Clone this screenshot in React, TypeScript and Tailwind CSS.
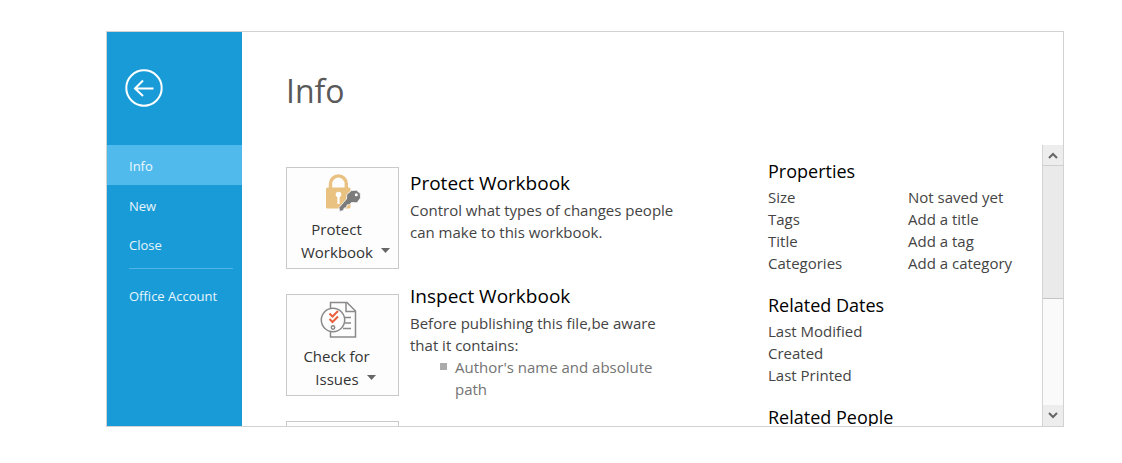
import type { ReactNode } from "react";

const navItem =
  "flex h-[39px] shrink-0 items-center pt-0.5 pl-[22px] text-[13px] leading-5 text-white/90";

function BackIcon() {
  return (
    <svg width="38" height="38" viewBox="0 0 38 38" fill="none" stroke="#fff" strokeWidth="2">
      <circle cx="19" cy="19" r="17.7" />
      <path d="M28.500 19.500H10.500M18 11.500 10 19.500l8 7.500" strokeWidth="2" />
    </svg>
  );
}

function LockKeyIcon() {
  return (
    <svg width="36" height="38" viewBox="0 0 36 38" fill="none">
      <path d="M5.500 15V9.800a7.900 7.900 0 0 1 15.800 0V15" stroke="#e9c180" strokeWidth="3.400" />
      <rect x="1" y="13.500" width="24.500" height="21" rx="1.500" fill="#e9c180" />
      <circle cx="13.500" cy="20.500" r="2.800" fill="#fff" />
      <path d="M12.400 21h2.200v9h-2.200z" fill="#fff" />
      <path
        d="m26.500 16.500 5-.3 3.800 3.300.2 4.500-3.500 4.800-5.500-.3-2 2-2.500.5-.5 2.500-2.500.7-.5 2.300-4 .9-.5-3.900 7.500-8.500.3-4.500z"
        fill="#7b7b7b"
        stroke="#fdfdfd"
        strokeWidth=".8"
      />
      <circle cx="31.300" cy="20.700" r="1.500" fill="#fff" />
    </svg>
  );
}

function InspectIcon() {
  return (
    <svg width="46" height="38" viewBox="0 0 46 38" fill="none" stroke="#8a8a8a" strokeWidth="1.500">
      <path d="M10.500 7V1.500H27l8.500 8.500v26h-25v-5.500" />
      <path d="M26 1.500V10.500h9.500M24 16.500h7M25 22h6M23 27.500h8" />
      <circle cx="13" cy="19" r="11.700" fill="#fdfdfd" />
      <circle cx="13" cy="26.500" r="1.700" />
      <path d="m9.500 12.500 3 3 5.500-5.500M9.500 18l3 3 5.500-5.500" stroke="#e8603c" strokeWidth="2" />
    </svg>
  );
}

function Caret() {
  return (
    <svg width="9" height="5" viewBox="0 0 9 5" className="mb-[11px]">
      <path d="M0 0h9L4.500 5z" fill="#666" />
    </svg>
  );
}

function Tile({ icon, first, second }: { icon: ReactNode; first: string; second: string }) {
  return (
    <button
      type="button"
      className="flex h-[102px] w-[113px] shrink-0 flex-col items-center border border-[#c9c9c9] bg-[#fdfdfd] pt-[6px] text-[15px] leading-[23px] text-[#333]"
    >
      {icon}
      <span className="mt-[6px] pr-3">{first}</span>
      <span className="flex items-end gap-2 pl-[6px]">
        {second}
        <Caret />
      </span>
    </button>
  );
}

function Group({ title, rows }: { title: string; rows: [string, string][] }) {
  return (
    <section className="mb-4">
      <h2 className="text-lg leading-[30px] text-black">{title}</h2>
      <table className="w-full text-[15px] leading-[22px] text-[#444]">
        <tbody>
          {rows.map(([name, value]) => (
            <tr key={name}>
              <th scope="row" className="w-[140px] p-0 text-left font-normal">
                {name}
              </th>
              <td className="p-0">{value}</td>
            </tr>
          ))}
        </tbody>
      </table>
    </section>
  );
}

function ScrollBar() {
  return (
    <div className="flex w-[21px] shrink-0 flex-col border-l border-[#d4d4d4] bg-[#fafafa]">
      <button
        type="button"
        aria-label="Scroll up"
        className="flex h-[21px] items-center justify-center border-b border-[#cfcfcf] bg-[#ededed]"
      >
        <svg width="10" height="7" viewBox="0 0 10 7" fill="none" stroke="#666" strokeWidth="2">
          <path d="m1 6 4-4 4 4" />
        </svg>
      </button>
      <div className="h-[133px] border-b border-[#c4c4c4] bg-[#eaeaea]" />
      <button
        type="button"
        aria-label="Scroll down"
        className="mt-auto flex h-[21px] items-center justify-center bg-[#ededed]"
      >
        <svg width="10" height="7" viewBox="0 0 10 7" fill="none" stroke="#666" strokeWidth="2">
          <path d="m1 1 4 4 4-4" />
        </svg>
      </button>
    </div>
  );
}

export default function App() {
  return (
    <div className="flex h-screen bg-white pt-[31px] pr-[58px] pb-9 pl-[106px] font-['Open_Sans','Noto_Sans',sans-serif]">
      <div className="flex min-w-0 flex-1 overflow-hidden border border-[#d2d2d2]">
        <nav className="flex w-[135px] shrink-0 flex-col bg-[#189bd7]">
          <button type="button" aria-label="Back" className="mt-[37px] mb-[38px] ml-[18px] self-start">
            <BackIcon />
          </button>
          <a
            href="#info"
            aria-current="page"
            className="flex h-10 shrink-0 items-center bg-[#50baec] pt-0.5 pl-[22px] text-[13px] leading-5 text-white/90"
          >
            Info
          </a>
          <a href="#new" className={navItem}>
            New
          </a>
          <a href="#close" className={navItem}>
            Close
          </a>
          <hr className="mt-[5px] mr-[9px] mb-[6px] ml-[22px] border-[#50b5e6]" />
          <a href="#account" className={navItem}>
            Office Account
          </a>
        </nav>
        <main className="flex min-w-0 flex-1 flex-col">
          <h1 className="flex h-[113px] shrink-0 items-center pt-1 pl-[44px] text-[32px] leading-10 text-[#595959]">
            Info
          </h1>
          <div className="flex min-h-0 flex-1">
            <div className="flex min-w-0 flex-1 overflow-hidden">
              <div className="flex min-w-0 flex-1 flex-col gap-[25px] pt-[22px] pl-[44px]">
                <section className="flex h-[102px] shrink-0 gap-[11px]">
                  <Tile icon={<LockKeyIcon />} first="Protect" second="Workbook" />
                  <div className="w-[280px] text-[15px] leading-[22px] text-[#444]">
                    <h2 className="text-[19px] leading-8 text-black">Protect Workbook</h2>
                    <p>
                      Control what types of changes people
                      <br />
                      can make to this workbook.
                    </p>
                  </div>
                </section>
                <section className="flex h-[102px] shrink-0 gap-[11px]">
                  <Tile icon={<InspectIcon />} first="Check for" second="Issues" />
                  <div className="-mt-[14px] w-[280px] text-[15px] leading-[22px] text-[#444]">
                    <h2 className="text-[19px] leading-8 text-black">Inspect Workbook</h2>
                    <p>
                      Before publishing this file,be aware
                      <br />
                      that it contains:
                    </p>
                    <ul className="pl-[30px] text-[#737373]">
                      <li className="flex gap-2">
                        <span className="mt-[7px] size-[7px] shrink-0 bg-[#ababab]" />
                        <span className="w-[210px]">Author's name and absolute path</span>
                      </li>
                    </ul>
                  </div>
                </section>
                <section className="h-[102px] w-[113px] shrink-0 border border-[#c9c9c9] bg-[#fdfdfd]" />
              </div>
              <aside className="w-[274px] shrink-0 pt-[11px]">
                <Group
                  title="Properties"
                  rows={[
                    ["Size", "Not saved yet"],
                    ["Tags", "Add a title"],
                    ["Title", "Add a tag"],
                    ["Categories", "Add a category"],
                  ]}
                />
                <Group
                  title="Related Dates"
                  rows={[
                    ["Last Modified", ""],
                    ["Created", ""],
                    ["Last Printed", ""],
                  ]}
                />
                <Group title="Related People" rows={[]} />
              </aside>
            </div>
            <ScrollBar />
          </div>
        </main>
      </div>
    </div>
  );
}
